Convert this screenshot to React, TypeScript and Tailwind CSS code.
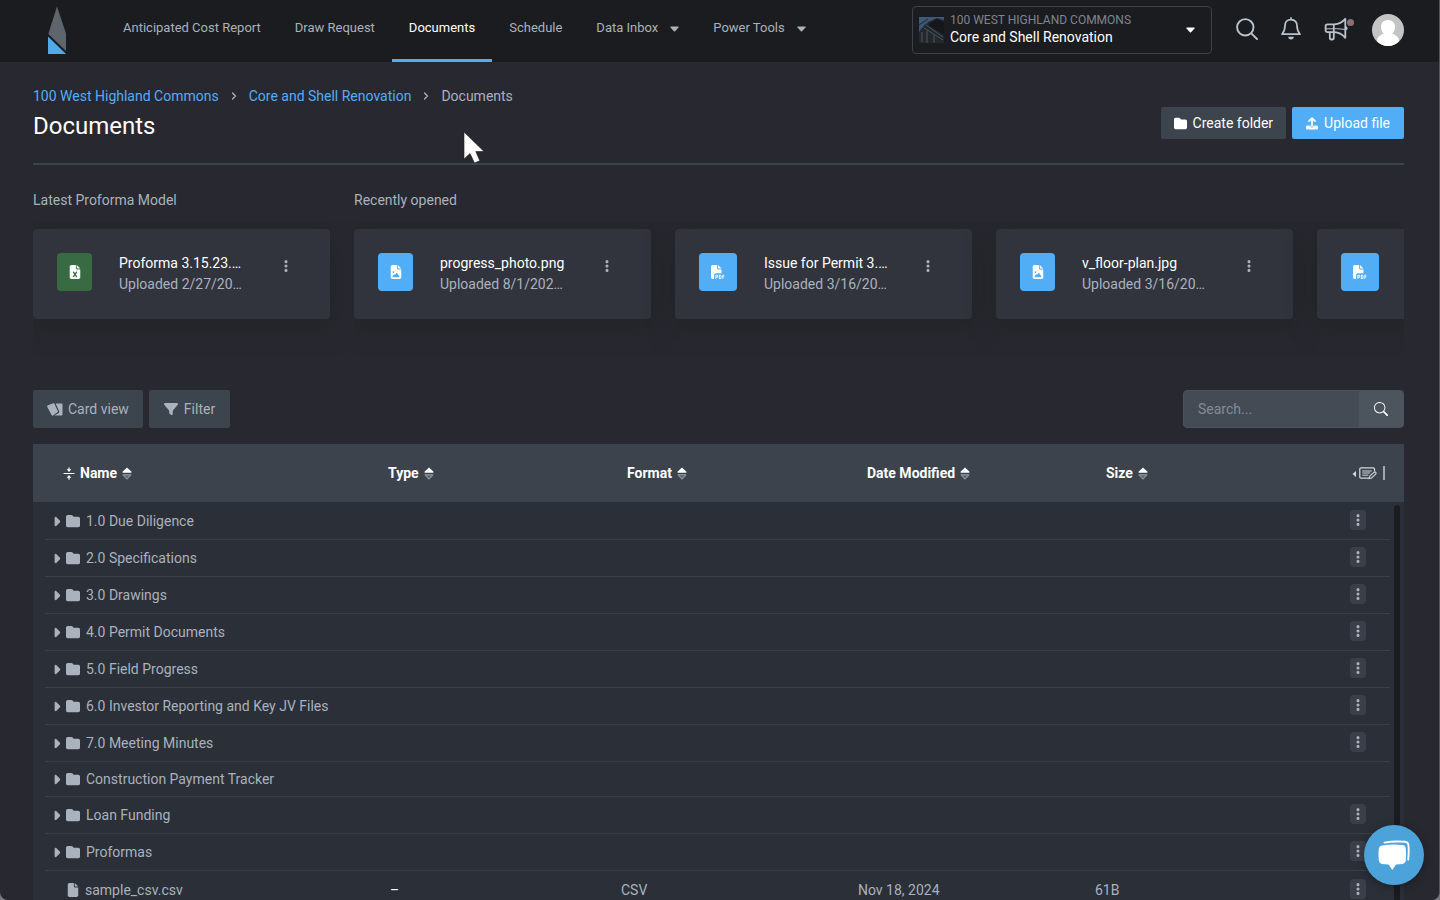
import React from "react";
import { BsSearch } from "react-icons/bs";
import {
  FaCaretRight,
  FaEllipsisVertical,
  FaFile,
  FaFileExcel,
  FaFileImage,
  FaFilePdf,
  FaFilter,
  FaFolder,
} from "react-icons/fa6";

function Logo() {
  return (
    <svg viewBox="0 0 18 48" className="h-12 w-[18px]" aria-hidden="true">
      <path d="M9 0.5 18 27.5V45L0.3 28Z" fill="#5f656c" />
      <path d="M0 30.5 18 48H0Z" fill="#4faaec" />
    </svg>
  );
}

function Caret({ className }: { className: string }) {
  return (
    <svg viewBox="0 0 9 6" className={className} aria-hidden="true">
      <path d="M1 0.4h7q1 .2.5 1L5.1 5.2q-.6.5-1.2 0L.5 1.4Q0 .6 1 .4Z" fill="currentColor" />
    </svg>
  );
}

function Chevron() {
  return (
    <svg viewBox="0 0 6 8" className="mx-3 h-2 w-1.5" aria-hidden="true">
      <path d="m1.500 1 3 3-3 3" fill="none" stroke="currentColor" strokeWidth="1.300" strokeLinecap="round" strokeLinejoin="round" />
    </svg>
  );
}

function SearchIcon() {
  return (
    <svg viewBox="0 0 22 22" className="size-[22px]" fill="none" stroke="currentColor" strokeWidth="1.900" strokeLinecap="round" aria-hidden="true">
      <circle cx="9.300" cy="9.300" r="8.200" />
      <path d="m15.300 15.300 5.700 5.700" />
    </svg>
  );
}

function BellIcon() {
  return (
    <svg viewBox="0 0 20 23" className="h-[23px] w-5" fill="none" stroke="currentColor" aria-hidden="true">
      <path d="M10 .9v1.600M10 2.600c-4 0-6 2.800-6 6.200 0 4.200-1 6-3 8.400h18c-2-2.400-3-4.200-3-8.400 0-3.400-2-6.200-6-6.200Z" strokeWidth="1.700" strokeLinecap="round" strokeLinejoin="round" />
      <path d="M7.300 19.800h5.400a2.700 2.700 0 0 1-5.400 0Z" fill="currentColor" stroke="none" />
    </svg>
  );
}

function MegaphoneIcon() {
  return (
    <svg viewBox="0 0 24 24" className="size-6" fill="none" stroke="currentColor" strokeWidth="1.800" strokeLinejoin="round" aria-hidden="true">
      <path d="M21.300 1.800v19c-3-3.400-6.500-5.400-11-5.600H3.500Q1.600 15.200 1.600 13.300V9.200q0-1.900 1.900-1.900h6.800c4.500-.2 8-2.100 11-5.500Z" />
      <path d="M9.800 7.300v13.500q0 1.700-1.600 1.700H7.400q-1.600 0-1.600-1.700V15" />
      <path d="M2 11.800q12-.5 19 .6" strokeWidth="1" />
      <path d="M22 9.200a2.200 2.200 0 0 1 0 4.200Z" fill="currentColor" stroke="none" />
    </svg>
  );
}

function UploadIcon() {
  return (
    <svg viewBox="0 0 12 13" className="h-[13px] w-3" aria-hidden="true">
      <path d="M6 9V1.6M3 4.2 6 1.2l3 3" fill="none" stroke="currentColor" strokeWidth="1.7" strokeLinecap="round" strokeLinejoin="round" />
      <path d="M1 8.6h3.4V9a1.6 1.6 0 0 0 3.2 0v-.4H11a1 1 0 0 1 1 1v1.9a1 1 0 0 1-1 1H1a1 1 0 0 1-1-1V9.600a1 1 0 0 1 1-1Z" fill="currentColor" />
    </svg>
  );
}

function CardsIcon() {
  return (
    <svg viewBox="0 0 16 13" className="h-[13px] w-4" aria-hidden="true">
      <path d="M1 2.300 6.200.2q.8-.3 1.200.5l3.400 7.300q.3.800-.4 1.200L6 12.500q-.8.500-1.300-.3L.3 4Q-.2 2.800 1 2.300Z" fill="currentColor" />
      <path d="M8.600.6h5.900q1 0 1 1v10q0 1-1 1H7.400l4-2.400q1.200-.8.700-2.200Z" fill="currentColor" />
    </svg>
  );
}

function CollapseIcon() {
  return (
    <svg viewBox="0 0 12 13" className="h-[13px] w-3" aria-hidden="true">
      <path d="M1 6.500h10M6 .8v2M6 10.200v2" stroke="currentColor" strokeWidth="1.200" strokeLinecap="round" />
      <path d="M3.700 2.300h4.600L6 4.900ZM3.700 10.700h4.600L6 8.100Z" fill="currentColor" />
    </svg>
  );
}

function SortIcon() {
  return (
    <svg viewBox="0 0 10 13" className="h-[13px] w-2.5" aria-hidden="true">
      <path d="M5 .4 9.500 4.700q.4 1.100-.7 1.100H1.200q-1.100 0-.7-1.100Z" fill="#fff" />
      <path d="M5 12 1.200 8h7.600Z" fill="#5b636c" stroke="#868d95" strokeWidth="1.100" strokeLinejoin="round" />
      <path d="M.8 7.600h8.400" stroke="#868d95" strokeWidth="1" />
    </svg>
  );
}

function NoteEditIcon() {
  return (
    <svg viewBox="0 0 26 14" className="h-3.5 w-[26px]" fill="none" stroke="currentColor" aria-hidden="true">
      <path d="M4 5v6L.5 8Z" fill="currentColor" stroke="none" />
      <path d="M17.500 12.200H9q-1.200 0-1.200-1.200V3Q7.800 1.800 9 1.800h12.300q1.200 0 1.200 1.200v2.200" strokeWidth="1.200" />
      <path d="M10.300 5h9.500M10.300 7h8M10.300 9.200h6" strokeWidth="1" />
      <path d="m17.800 10.200 4.300-4q1-.7 1.700.1t0 1.700l-4.200 4-2.400.6Z" strokeWidth="1.100" />
    </svg>
  );
}

function ProjectThumb() {
  return (
    <svg viewBox="0 0 25 26" className="h-[26px] w-[25px]" aria-hidden="true">
      <rect width="25" height="26" fill="#24282d" />
      <path d="M0 0h25v3L18 1 9 5 0 15Z" fill="#3d5a78" />
      <path d="M9 8 17 2l8 3v13Z" fill="#15171a" />
      <path d="M7 8 24 20M5 11l19 12" stroke="#42566a" strokeWidth="1" />
      <path d="M3 15v10M8 14v12M15 18v8" stroke="#4a5058" strokeWidth="1.200" />
      <path d="M0 8 9 2M1 14l6-7" stroke="#2a3138" strokeWidth="1.200" />
    </svg>
  );
}

function Avatar() {
  return (
    <svg viewBox="0 0 32 32" className="size-8 rounded-full" aria-hidden="true">
      <rect width="32" height="32" fill="#c4c4c4" />
      <path d="M16 6c4.500 0 7 3 7 7 0 3-1.200 5.200-3 6.600 3.500 1 6.200 3.400 7.300 7L24 32H8l-3.300-5.400c1.100-3.600 3.800-6 7.300-7-1.800-1.400-3-3.600-3-6.600 0-4 2.500-7 7-7Z" fill="#fff" />
    </svg>
  );
}

function ChatIcon() {
  return (
    <svg viewBox="0 0 32 31" className="h-[31px] w-8" aria-hidden="true">
      <path d="M4 5.500q10-1.600 20.500-.6 3 .4 3.300 3.400.6 6 0 12-.4 3.200-3.300 3.600l-6.500.6L14.300 30 10.500 24.500 4 23.900Q1.200 23.500.8 20.500q-.7-6.500 0-12Q1.200 6 4 5.500Z" fill="#fff" />
      <path d="M6.500 2.600q9-1.700 20.500-.8 3.200.4 3.500 3.600.5 6.500-.3 14.200" fill="none" stroke="#fff" strokeWidth="1.900" strokeLinecap="round" />
    </svg>
  );
}

function Pointer() {
  return (
    <svg viewBox="0 0 22 34" className="absolute top-[131px] left-[463px] h-[34px] w-[22px]" aria-hidden="true">
      <path d="M1 1v27l6-5.500L11.500 32l5.300-2.200L12.800 20.500H21Z" fill="#fff" stroke="#1b1c1f" strokeWidth=".6" />
    </svg>
  );
}

const navItems = [
  { label: "Anticipated Cost Report" },
  { label: "Draw Request" },
  { label: "Documents", active: true },
  { label: "Schedule" },
  { label: "Data Inbox", menu: true },
  { label: "Power Tools", menu: true },
];

function TopBar() {
  return (
    <header className="flex h-[62px] shrink-0 items-stretch bg-[#1b1c1f] pr-[35px] pl-12">
      <a href="#" aria-label="Home" className="mr-10 flex items-start pt-1.5">
        <Logo />
      </a>
      <nav className="flex items-stretch text-[13px]">
        {navItems.map((item) => (
          <a
            key={item.label}
            href="#"
            className={
              item.active
                ? "flex items-center border-b-3 border-[#52adf7] px-[17px] pb-[3px] text-white"
                : "flex items-center border-b-3 border-transparent px-[17px] pb-[3px]"
            }
          >
            {item.label}
            {item.menu && <Caret className="mt-0.5 ml-3 h-1.5 w-[9px]" />}
          </a>
        ))}
      </nav>
      <button
        type="button"
        className="mt-1.5 mb-2 ml-auto flex w-[300px] items-center rounded border border-[#3a424c] pl-1.5 pr-4 text-left"
      >
        <ProjectThumb />
        <span className="ml-1.5 flex grow flex-col pb-0.5">
          <span className="text-xs leading-[17px] text-[#7d858f]">100 WEST HIGHLAND COMMONS</span>
          <span className="text-sm leading-[17px] text-white">Core and Shell Renovation</span>
        </span>
        <Caret className="h-1.5 w-[9px] text-white" />
      </button>
      <div className="ml-6 flex items-center pb-0.5 text-[#b9c3cf]">
        <div className="mr-6 flex items-center gap-[23px] pb-[3px]">
          <button type="button" aria-label="Search"><SearchIcon /></button>
          <button type="button" aria-label="Notifications"><BellIcon /></button>
          <button type="button" aria-label="Announcements" className="relative">
            <MegaphoneIcon />
            <span className="absolute top-0.5 -right-1.5 size-[7px] rounded-full bg-[#8b6f73]" />
          </button>
        </div>
        <button type="button" aria-label="Account"><Avatar /></button>
      </div>
    </header>
  );
}

function PageHeading() {
  return (
    <div className="flex items-start justify-between border-b-2 border-[#3b444d] pb-[21px]">
      <div>
        <nav aria-label="Breadcrumb" className="flex items-center text-[#a9b2bd]">
          <a href="#" className="text-[#52adf7]">100 West Highland Commons</a>
          <Chevron />
          <a href="#" className="text-[#52adf7]">Core and Shell Renovation</a>
          <Chevron />
          <span>Documents</span>
        </nav>
        <h1 className="mt-1 text-2xl leading-8 text-white">Documents</h1>
      </div>
      <div className="mt-[21px] flex gap-1.5 text-white">
        <button type="button" className="flex h-8 items-center gap-1.5 rounded-xs bg-[#3c444d] px-[13px]">
          <FaFolder className="size-[13px]" />
          Create folder
        </button>
        <button type="button" className="flex h-8 items-center gap-1.5 rounded-xs bg-[#52adf7] px-3.5">
          <UploadIcon />
          Upload file
        </button>
      </div>
    </div>
  );
}

type CardData = { name: string; date: string; kind: "excel" | "image" | "pdf" };

const latest: CardData = { name: "Proforma 3.15.23.…", date: "Uploaded 2/27/20…", kind: "excel" };
const recent: CardData[] = [
  { name: "progress_photo.png", date: "Uploaded 8/1/202…", kind: "image" },
  { name: "Issue for Permit 3.…", date: "Uploaded 3/16/20…", kind: "pdf" },
  { name: "v_floor-plan.jpg", date: "Uploaded 3/16/20…", kind: "image" },
  { name: "", date: "", kind: "pdf" },
];

function FileCard({ card }: { card: CardData }) {
  return (
    <article className="flex h-[90px] w-[297px] shrink-0 items-start rounded-sm bg-[#31343d] px-6 pt-6 shadow-[0_8px_24px_2px_#232527]">
      {card.kind === "excel" && (
        <span className="flex h-[38px] w-[35px] shrink-0 items-center justify-center rounded-sm bg-[#396b43] text-white">
          <FaFileExcel className="size-3.5" />
        </span>
      )}
      {card.kind === "image" && (
        <span className="flex h-[38px] w-[35px] shrink-0 items-center justify-center rounded-sm bg-[#52adf7] text-white">
          <FaFileImage className="size-3.5" />
        </span>
      )}
      {card.kind === "pdf" && (
        <span className="flex size-[38px] shrink-0 items-center justify-center rounded-sm bg-[#52adf7] text-white">
          <FaFilePdf className="size-3.5" />
        </span>
      )}
      {card.name && (
        <>
          <div className="ml-[27px] leading-[21px] whitespace-nowrap">
            <p className="text-white">{card.name}</p>
            <p>{card.date}</p>
          </div>
          <button type="button" aria-label={"Options for " + card.name} className="mt-1.5 mr-[13px] ml-auto">
            <FaEllipsisVertical className="size-3.5" />
          </button>
        </>
      )}
    </article>
  );
}

function RecentFiles() {
  return (
    <div className="flex gap-6 pt-[25px]">
      <section className="shrink-0">
        <h2 className="leading-5">Latest Proforma Model</h2>
        <div className="-mr-6 mt-3 overflow-hidden pt-[7px] pr-6 pb-9">
          <FileCard card={latest} />
        </div>
      </section>
      <section className="min-w-0 grow">
        <h2 className="leading-5">Recently opened</h2>
        <div className="mt-3 flex gap-6 overflow-hidden pt-[7px] pb-9">
          {recent.map((card, i) => (
            <FileCard key={i} card={card} />
          ))}
        </div>
      </section>
    </div>
  );
}

function Toolbar() {
  return (
    <div className="mt-[35px] flex h-[38px] justify-between">
      <div className="flex gap-1.5">
        <button type="button" className="flex items-center gap-[5px] rounded-xs bg-[#3c444d] px-3.5">
          <CardsIcon />
          Card view
        </button>
        <button type="button" className="flex items-center gap-1.5 rounded-xs bg-[#3c444d] px-[15px]">
          <FaFilter className="size-3.5" />
          Filter
        </button>
      </div>
      <div className="flex w-[221px] overflow-hidden rounded-sm border border-[#4a535d] bg-[#444b54]">
        <input
          type="text"
          aria-label="Search documents"
          placeholder="Search..."
          className="min-w-0 grow bg-transparent pl-3.5 outline-none placeholder:text-[#838b95]"
        />
        <button type="button" aria-label="Run search" className="flex w-11 shrink-0 items-center justify-center bg-[#4c545e] text-white">
          <BsSearch className="size-3.5" />
        </button>
      </div>
    </div>
  );
}

const folders = [
  "1.0 Due Diligence",
  "2.0 Specifications",
  "3.0 Drawings",
  "4.0 Permit Documents",
  "5.0 Field Progress",
  "6.0 Investor Reporting and Key JV Files",
  "7.0 Meeting Minutes",
  "Construction Payment Tracker",
  "Loan Funding",
  "Proformas",
];
const columns = ["Name", "Type", "Format", "Date Modified", "Size"];

function RowMenu({ name }: { name: string }) {
  return (
    <button
      type="button"
      aria-label={"Options for " + name}
      className="mr-6 mb-0.5 ml-auto flex h-5 w-4 items-center justify-center rounded bg-[#3b3f4a]"
    >
      <FaEllipsisVertical className="size-3.5" />
    </button>
  );
}

function DocumentsTable() {
  return (
    <div className="relative mt-4 bg-[#2b2f38]">
      <table className="block w-full text-left">
        <thead className="block bg-[#3c434c] text-white">
          <tr className="grid h-[58px] grid-cols-[355fr_239fr_240fr_239fr_298fr] items-center">
            {columns.map((column, i) => (
              <th
                key={column}
                scope="col"
                className={i === 0 ? "flex items-center gap-[5px] pl-[30px] font-bold" : "flex items-center gap-[5px] font-bold"}
              >
                {i === 0 && <CollapseIcon />}
                {column}
                <SortIcon />
                {i === 4 && (
                  <span className="mr-[19px] ml-auto flex items-center gap-[5px] text-[#d5d9de]">
                    <NoteEditIcon />
                    <span className="h-3.5 w-0.5 bg-[#a3a8ae]" />
                  </span>
                )}
              </th>
            ))}
          </tr>
        </thead>
        <tbody className="block pt-px pr-3.5 pl-3">
          {folders.map((name) => {
            const locked = name === "Construction Payment Tracker";
            return (
              <tr
                key={name}
                className={
                  locked
                    ? "flex h-[35px] items-center border-b border-[#3a3f4b]"
                    : "flex h-[37px] items-center border-b border-[#3a3f4b]"
                }
              >
                <td className="flex items-center pl-2">
                  <button type="button" aria-label={"Expand " + name} className="flex w-[13px]">
                    <FaCaretRight className="-ml-1 size-[15px] shrink-0" />
                  </button>
                  <FaFolder className="mr-1.5 size-3.5" />
                  {name}
                </td>
                <td className="flex grow">{!locked && <RowMenu name={name} />}</td>
              </tr>
            );
          })}
          <tr className="grid h-[37px] grid-cols-[339fr_237fr_237fr_237fr_295fr] items-center">
            <td className="flex items-center pl-[21px]">
              <FaFile className="mr-[5px] size-3.5" />
              sample_csv.csv
            </td>
            <td className="pl-1.5 text-white">–</td>
            <td>CSV</td>
            <td>Nov 18, 2024</td>
            <td className="flex items-center">
              61B
              <RowMenu name="sample_csv.csv" />
            </td>
          </tr>
        </tbody>
      </table>
      <div className="absolute top-[61px] right-1 bottom-0 w-1.5 rounded-full bg-[#1b1c1f]" />
    </div>
  );
}

export default function App() {
  return (
    <div className="bg-[#77797e] font-['Roboto',sans-serif] text-sm text-[#a9b2bd]">
      <div className="relative flex h-screen flex-col overflow-hidden rounded-b-lg border-r border-[#55565c] bg-[#282830]">
        <TopBar />
        <main className="min-h-0 grow overflow-hidden pt-6 pr-[35px] pl-[33px]">
          <PageHeading />
          <RecentFiles />
          <Toolbar />
          <DocumentsTable />
        </main>
        <button
          type="button"
          aria-label="Open chat"
          className="absolute right-[15px] bottom-[15px] flex size-[60px] items-center justify-center rounded-full bg-[#4ba3da] shadow-[0_2px_10px_rgba(0,0,0,0.3)]"
        >
          <ChatIcon />
        </button>
        <Pointer />
      </div>
    </div>
  );
}
